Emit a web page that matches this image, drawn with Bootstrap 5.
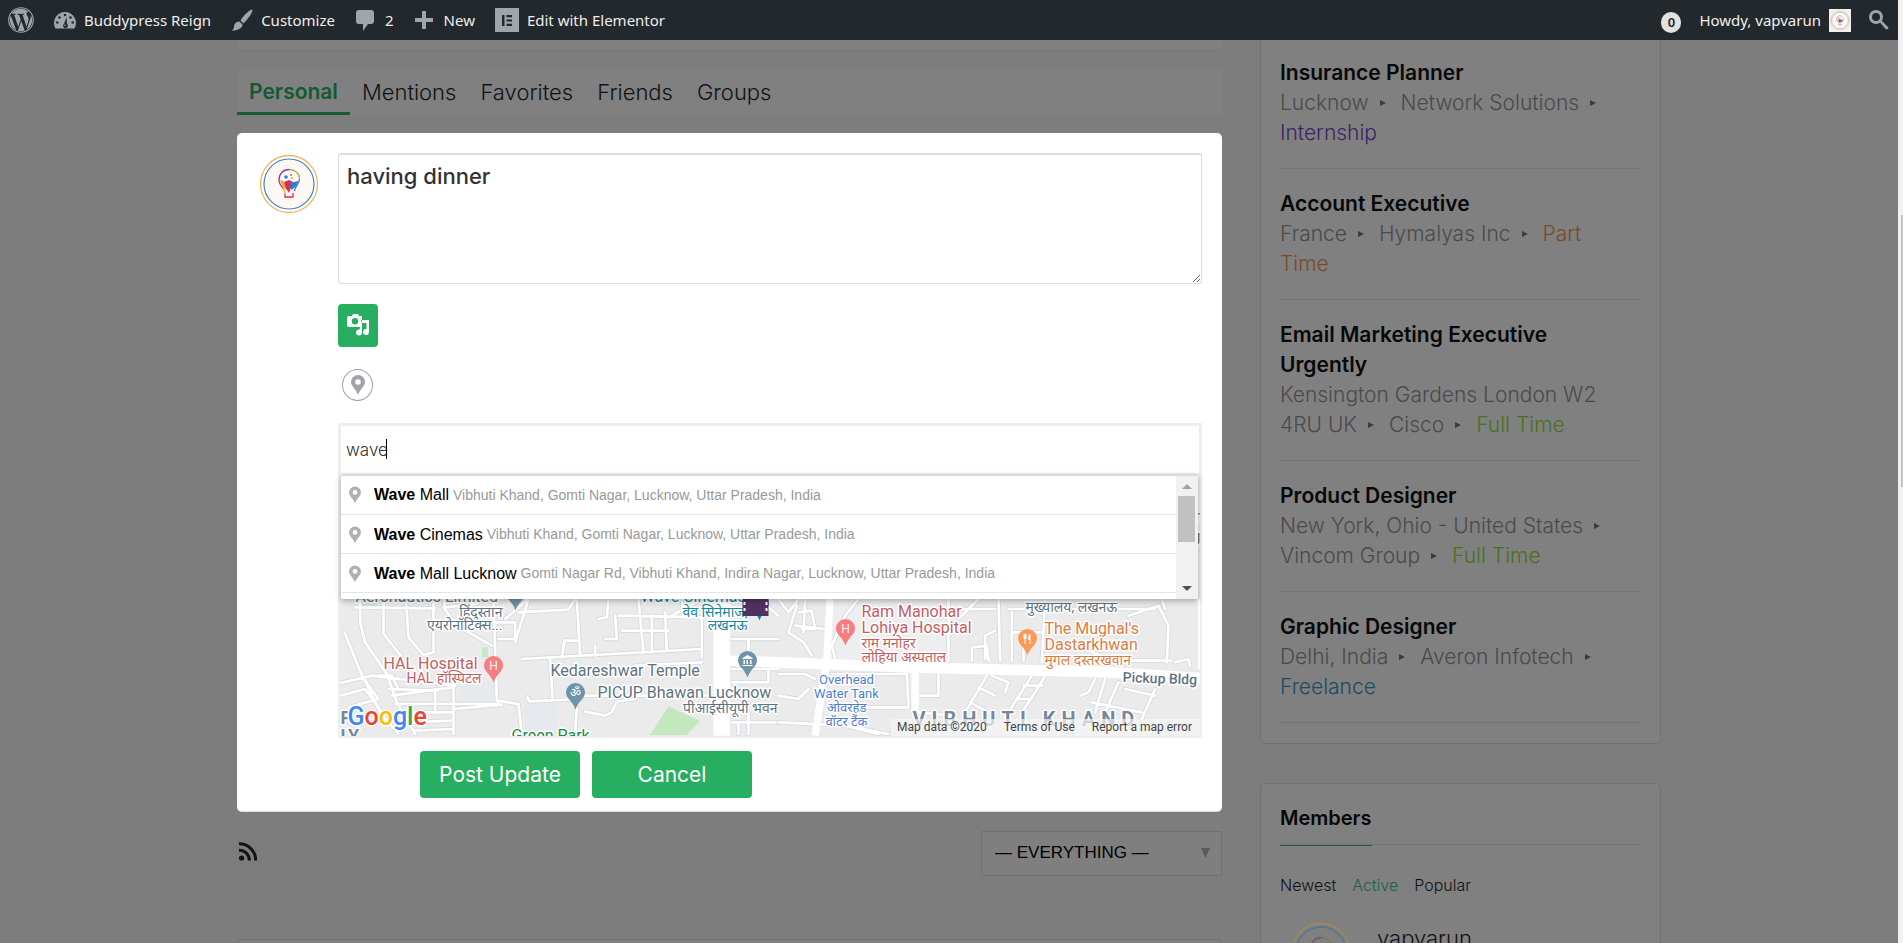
<!DOCTYPE html>
<html lang="en">
<head>
<meta charset="utf-8">
<meta name="viewport" content="width=device-width, initial-scale=1">
<title>Activity – Buddypress Reign</title>
<link href="https://cdn.jsdelivr.net/npm/bootstrap@5.3.0/dist/css/bootstrap.min.css" rel="stylesheet">
<style>
  body { background: #7d7d7d; font-family: Inter, "Noto Sans", sans-serif; color: #101316; overflow: hidden; height: 100vh; border-right: 5px solid #f1f1f1; }
  a { text-decoration: none; color: inherit; }
  .admin-bar { background: #23282d; height: 40px; color: #eee; font: 15px/40px "Noto Sans", sans-serif; padding: 0 9px 0 8px; }
  .admin-bar svg { fill: #a0a5aa; flex: none; }
  .admin-left { gap: 20px; }
  .admin-right { gap: 18px; }
  .count-pill { background: #e1e1e1; color: #23282d; width: 20px; height: 21px; border-radius: 10px; font-size: 13px; font-weight: 600; line-height: 20px; text-align: center; margin-top: 5px; }
  .page-wrap { max-width: 1424px; width: 100%; margin: 0 auto; gap: 38px; }
  .main-col { flex: 1 1 auto; min-width: 0; }
  .side-col { flex: 0 0 401px; }
  .top-panel { height: 11px; background: #808080; border-bottom: 1px solid #7a7a7a; }
  .tab-strip { background: #808080; margin-top: 19px; height: 45px; font-size: 22px; font-weight: 300; line-height: 44px; }
  .tab-strip a { padding: 0 12px; height: 45px; }
  .tab-strip a.current { color: #125a30; font-weight: 600; font-size: 21px; border-bottom: 3px solid #175c33; }
  .composer { background: #fff; border-radius: 5px; margin-top: 18px; padding: 20px 20px 13px 22px; border-bottom: 1px solid #ddd; }
  .composer-avatar { margin-right: 19px; }
  .status-box { height: 131px; border: 1px solid #ddd; border-top: 2px solid #dedede; border-radius: 3px; color: #333; font-size: 22px; font-weight: 500; line-height: 28px; padding: 7px 8px; resize: vertical; width: 100%; display: block; }
  .green-btn { background: #27ae60; color: #fff; border: 0; border-radius: 4px; }
  .media-btn { width: 40px; height: 43px; margin-top: 20px; display: block; padding: 0 0 3px; }
  .pin-btn { width: 31px; height: 32px; margin: 22px 0 0 4px; border: 1px solid #a0a0a6; border-radius: 50%; background: #fff; padding: 0; display: block; line-height: 1; }
  .place-box { border: 2px solid #eee; margin-top: 22px; position: relative; }
  .place-input { display: block; width: 100%; height: 49px; border: 1px solid #eee; padding: 0 5px; font-size: 17px; font-weight: 300; color: #333; outline: 0; }
  .caret-line { position: absolute; left: 46px; top: 14px; width: 1px; height: 20px; background: #000; }
  .suggest { position: absolute; top: 50px; left: 1px; right: 2px; height: 124px; background: #fff; box-shadow: 0 2px 6px rgba(0,0,0,.3); border-top: 1px solid #d9d9d9; border-radius: 2px; overflow: hidden; font-family: "Liberation Sans", Arial, sans-serif; z-index: 2; }
  .suggest button { display: flex; align-items: center; width: 100%; height: 39px; border: 0; border-bottom: 1px solid #e6e6e6; background: #fff; color: #999; font-size: 14px; text-align: left; padding: 1px 0 0 8px; white-space: nowrap; overflow: hidden; }
  .suggest button:first-child { padding-top: 0; }
  .suggest .place { font-size: 16px; color: #000; margin: 0 4px 0 13px; }
  .bar-track { flex: 0 0 22px; background: #f1f1f1; padding: 8px 3px 8px 2px; }
  .bar-thumb { height: 46px; width: 17px; background: #c1c1c1; margin-top: 7px; }
  .map-view { display: block; width: 100%; height: 262px; background: #ebebeb; font-family: Roboto, "Noto Sans", sans-serif; }
  .map-foot { position: absolute; right: 0; bottom: 0; background: rgba(245,245,245,.7); font: 12px/17px Roboto, sans-serif; color: #444; padding: 0 8px 0 6px; gap: 17px; }
  .composer-actions { gap: 12px; margin: 13px 0 0 161px; }
  .action-btn { width: 160px; height: 47px; font-size: 21px; line-height: 47px; padding: 0; }
  .action-btn:hover { background: #219653; color: #fff; }
  .filter-row { margin-top: 19px; height: 45px; }
  .rss-link { margin: 0 0 4px 2px; }
  .filter-select { width: 241px; height: 45px; background: #7f7f7f; border: 1px solid #707070; border-radius: 2px; appearance: none; font: 17px "Liberation Sans", Arial, sans-serif; color: #000; padding: 0 13px 2px; display: block; }
  .select-mark { position: absolute; right: 12px; top: 17px; }
  .feed-top { margin-top: 63px; height: 40px; border: 1px solid #717171; border-radius: 4px; background: #808080; }
  .side-panel { background: #808080; border: 1px solid #727272; border-radius: 5px; padding: 0 19px; }
  .jobs { border-top: 0; border-radius: 0 0 5px 5px; padding-bottom: 20px; font-size: 21px; line-height: 30px; }
  .job { padding: 20px 0; border-bottom: 1px solid #757575; }
  .job:first-child { padding-top: 18px; }
  .job h3 { font-size: 21px; line-height: 30px; font-weight: 600; margin: 0; color: #070809; }
  .job p { margin: 0; font-weight: 300; color: #4a4a4a; }
  .sep { display: inline-block; border: 3px solid transparent; border-left: 6px solid #3c3c3c; border-right: 0; margin: 0 15px 4px 11px; }
  .type-intern { color: #3a2468; }
  .type-part { color: #7d482a; }
  .type-full { color: #48701e; }
  .type-free { color: #1f4a63; }
  .members { margin-top: 39px; height: 240px; }
  .members h2 { font-size: 20px; font-weight: 600; line-height: 24px; padding: 22px 0 14px; margin: 0; border-bottom: 1px solid #747474; color: #070809; }
  .members h2 span { border-bottom: 1px solid #17633a; padding-bottom: 15px; }
  .member-tabs { font-size: 16px; font-weight: 300; line-height: 20px; margin-top: 30px; gap: 16px; }
  .member-tabs .current { color: #17633a; }
  .member-row { margin-top: 27px; }
  .member-avatar { margin: 0 26px 0 11px; opacity: .55; }
  .member-name { font-size: 22px; font-weight: 300; line-height: 32px; }
  .page-thumb { position: absolute; right: 0; top: 215px; width: 2px; height: 272px; background: #c1c1c1; z-index: 5; }
</style>
</head>
<body>
<svg width="0" height="0" class="position-absolute" aria-hidden="true">
  <defs>
    <symbol id="bulb" viewBox="0 0 60 60">
      <circle cx="30" cy="30" r="28.500" fill="none" stroke="#f0b45c" stroke-width="1.300"/>
      <circle cx="30" cy="30" r="25" fill="#fdf8f3" stroke="#3f86bd" stroke-width="1.200"/>
      <g fill="none" stroke-width="1.300">
        <path d="M24 34c-3-3-4-5-4-8 0-6 4-10.500 10-10.500" stroke="#8d3f97"/>
        <path d="M30 15.500c6 0 10.500 4 10.500 9" stroke="#8fb33c"/>
        <path d="M40.500 25c0 5-5 8-5 12" stroke="#3778bd"/>
        <path d="M24 34c2 2 2 3 2 6" stroke="#e8a13a"/>
        <path d="M26 40v3h8v-4" stroke="#d1315f"/>
      </g>
      <path d="M21 26q3 0 4 2l3 8q-5-2-7-10" fill="#f0a92c"/>
      <path d="M25 28l5-2 4 2-4 11q-4-5-5-11" fill="#dc2b56"/>
      <path d="M31 29l8-2q0 5-7 9" fill="#2c7fd0"/>
      <circle cx="27" cy="23" r="1.800" fill="#2c7fd0"/><circle cx="32" cy="21" r="1" fill="#e2507d"/><circle cx="33" cy="24" r="1" fill="#f0a92c"/>
    </symbol>
    <symbol id="bulb-line" viewBox="0 0 60 60">
      <g fill="none" stroke-width="1.300">
        <circle cx="30" cy="30" r="28.500" stroke="#c98e3a"/><circle cx="30" cy="30" r="25" stroke="#2d6f9f"/>
        <path d="M24 34c-3-3-4-5-4-8 0-6 4-10.500 10-10.500" stroke="#5d2a64"/><path d="M30 15.500c6 0 10.500 4 10.500 9" stroke="#5c7722"/>
      </g>
    </symbol>
    <symbol id="pin" viewBox="0 0 14 20"><path fill-rule="evenodd" d="M7 0a7 7 0 0 1 7 7c0 4-5 7-7 13C5 14 0 11 0 7a7 7 0 0 1 7-7m0 4.200a2.800 2.800 0 1 0 0 5.600 2.800 2.800 0 0 0 0-5.600"/></symbol>
    <symbol id="drop" viewBox="0 0 20 27"><path d="M10 0a9.500 9.500 0 0 1 9.500 9.500c0 6-6.500 8-9.500 17-3-9-9.500-11-9.500-17A9.500 9.500 0 0 1 10 0"/></symbol>
  </defs>
</svg>
<div class="page-thumb"></div>

<nav class="admin-bar d-flex justify-content-between" aria-label="Toolbar">
  <div class="admin-left d-flex align-items-center">
    <a href="#" class="d-flex" aria-label="WordPress"><svg width="26" height="26" viewBox="0 0 16 16"><circle cx="8" cy="8" r="7.550" fill="none" stroke="#a0a5aa" stroke-width=".7"/><path d="M12.633 7.653c0-.848-.305-1.435-.566-1.892l-.08-.13c-.317-.51-.594-.958-.594-1.480 0-.63.478-1.218 1.152-1.218.02 0 .039.002.058.003l.031.003A6.838 6.838 0 0 0 8 1.137 6.855 6.855 0 0 0 2.266 4.230c.16.005.313.009.442.009.717 0 1.828-.087 1.828-.087.37-.022.414.521.044.565 0 0-.371.044-.785.065l2.500 7.434 1.500-4.506-1.070-2.929c-.369-.022-.719-.065-.719-.065-.37-.022-.326-.588.043-.566 0 0 1.134.087 1.808.087.718 0 1.830-.087 1.830-.087.37-.022.413.522.043.566 0 0-.372.043-.785.065l2.480 7.377.684-2.287.054-.173c.27-.86.469-1.495.469-2.046zM1.137 8a6.864 6.864 0 0 0 3.868 6.176L1.730 5.206A6.837 6.837 0 0 0 1.137 8z"/><path d="M6.061 14.583 8.121 8.600l2.109 5.780c.014.033.03.064.049.094a6.854 6.854 0 0 1-4.218.109zm7.960-9.876c.03.219.047.453.047.706 0 .696-.13 1.479-.522 2.458l-2.096 6.060a6.860 6.860 0 0 0 2.572-9.224z"/></svg></a>
    <a href="#" class="d-flex align-items-center"><svg width="22" height="17" viewBox="0 0 22 17"><path d="M11 0a11 11 0 0 1 9.500 16.500h-19A11 11 0 0 1 11 0"/><g fill="#23282d"><circle cx="11" cy="3" r="1.300"/><circle cx="5.500" cy="5.500" r="1.300"/><circle cx="3.300" cy="10.500" r="1.300"/><circle cx="18.700" cy="10.500" r="1.300"/><circle cx="16.500" cy="5.500" r="1.300"/><path d="M12.500 5l.5 7a2.300 2.300 0 1 1-3 0z"/></g><circle cx="11" cy="13.300" r=".8"/></svg><span class="ms-2">Buddypress Reign</span></a>
    <a href="#" class="d-flex align-items-center"><svg width="22" height="22" viewBox="0 0 22 22"><path d="M21.500.5c-3 0-9 6-12 11l3 3C17 10 21.500 4 21.500.5M8.500 12.500l3 3c0 3-4 6.500-11 6 3-1.500 2-3 3-6 .8-2 3-3 5-3"/></svg><span class="ms-2">Customize</span></a>
    <a href="#" class="d-flex align-items-center gap-2"><svg width="22" height="21" viewBox="0 0 22 21"><path d="M4 0h12q3 0 3 3v8q0 3-3 3h-3l-5 7v-7H4q-3 0-3-3V3q0-3 3-3"/></svg><span>2</span></a>
    <a href="#" class="d-flex align-items-center gap-2"><svg width="22" height="18" viewBox="0 0 22 18"><path d="M8 0h4v7h7v4h-7v7H8v-7H1V7h7z"/></svg><span>New</span></a>
    <a href="#" class="d-flex align-items-center"><svg width="24" height="24" viewBox="0 0 24 24"><path fill-rule="evenodd" d="M0 0h24v24H0zM7 7v11h2.500V7zM11.500 7v2.200H17V7zm0 4.400v2.200H17v-2.200zm0 4.400V18H17v-2.200z"/></svg><span class="ms-2">Edit with Elementor</span></a>
  </div>
  <div class="admin-right d-flex align-items-center">
    <a href="#" class="count-pill">0</a>
    <a href="#" class="d-flex align-items-center">Howdy, vapvarun<svg class="ms-2" width="22" height="23" viewBox="0 0 22 23"><rect width="22" height="23" fill="#f3f1ee"/><use href="#bulb" x="1" y="1" width="20" height="21"/></svg></a>
    <a href="#" class="d-flex" aria-label="Search"><svg width="20" height="20" viewBox="0 0 20 20"><circle cx="7" cy="7" r="5.500" fill="none" stroke="#a0a5aa" stroke-width="3"/><path d="M10.500 12l2-1.500 7 7q0 2-2.500 2z"/></svg></a>
  </div>
</nav>

<div class="page-wrap d-flex align-items-start">
  <main class="main-col">
    <div class="top-panel"></div>
    <nav class="tab-strip d-flex" aria-label="Activity">
      <a href="#" class="current">Personal</a><a href="#">Mentions</a><a href="#">Favorites</a><a href="#">Friends</a><a href="#">Groups</a>
    </nav>

    <form class="composer">
      <div class="d-flex">
        <svg class="composer-avatar flex-shrink-0" width="60" height="62"><use href="#bulb" width="60" height="62"/></svg>
        <div class="flex-grow-1">
          <textarea class="status-box" aria-label="What's new">having dinner</textarea>
          <button type="button" class="green-btn media-btn" aria-label="Add media"><svg width="23" height="22" viewBox="0 0 23 22" fill="#fff"><path fill-rule="evenodd" d="M2 2h3l1-2h5l1 2h3v4h-1v7H2q-2 0-2-2V4q0-2 2-2m6 2a3 3 0 1 0 0 6.500A3 3 0 0 0 8 4"/><path d="M15 6h7v12a3 3 0 1 1-2.500-3V9H15v9.500a3 3 0 1 1-2.500-3z"/></svg></button>
          <button type="button" class="pin-btn" aria-label="Add location"><svg width="14" height="20" fill="#a2a2aa"><use href="#pin"/></svg></button>
          <div class="place-box">
            <input class="place-input" type="text" value="wave" aria-label="Place">
            <span class="caret-line"></span>
            <div class="suggest d-flex">
              <div class="flex-grow-1 overflow-hidden">
                <button type="button"><svg width="12" height="20" fill="#b0b0b0"><use href="#pin"/></svg><span class="place"><b>Wave</b> Mall</span>Vibhuti Khand, Gomti Nagar, Lucknow, Uttar Pradesh, India</button>
                <button type="button"><svg width="12" height="20" fill="#b0b0b0"><use href="#pin"/></svg><span class="place"><b>Wave</b> Cinemas</span>Vibhuti Khand, Gomti Nagar, Lucknow, Uttar Pradesh, India</button>
                <button type="button"><svg width="12" height="20" fill="#b0b0b0"><use href="#pin"/></svg><span class="place"><b>Wave</b> Mall Lucknow</span>Gomti Nagar Rd, Vibhuti Khand, Indira Nagar, Lucknow, Uttar Pradesh, India</button>
              </div>
              <div class="bar-track d-flex flex-column justify-content-between align-items-center">
                <div class="d-flex flex-column align-items-center"><svg width="10" height="5"><path d="M0 5l5-5 5 5z" fill="#a3a3a3"/></svg><div class="bar-thumb"></div></div>
                <svg width="10" height="5"><path d="M0 0h10L5 5z" fill="#505050"/></svg>
              </div>
            </div>
            <svg class="map-view" viewBox="0 0 861 262" preserveAspectRatio="xMidYMid slice" role="img" aria-label="Map of Vibhuti Khand">
              <rect width="861" height="262" fill="#ebebeb"/>
              <defs>
                <g id="roadsA" fill="none" stroke-linejoin="round" stroke-linecap="round">
                  <path d="M80 85L320 88M95 60V130L110 190 175 285 205 370 260 465M165 60V165L225 240M232 60L240 175 285 228 315 220V60M345 60L350 85 440 75 470 60M345 85L385 140 490 200M48 160L90 265 155 400 210 465M0 320L130 290 380 320M35 350L110 330 160 400M100 290L150 360 60 385M190 350L370 325M180 330L325 335M200 375L510 375M320 330V395M375 250V465M210 400H375M240 430L375 425M260 455L375 450M210 330L190 290 150 290M495 60L505 365 570 375 580 465M375 390L520 377M500 130L560 130 560 180 510 180M530 120L600 60M570 100L720 92 740 60M580 240L1120 210M745 60L755 230M700 235L708 185H750M665 240L672 355M800 200V230M840 60L835 115 810 120M860 110L865 180 830 180M870 110L1120 115M930 60L945 220M970 110V220M1010 100L1015 215M880 155H1020M1060 60L1065 115M1120 115V235M1020 115L1120 60M920 260L1120 250M597 355L603 367 760 360M740 350H1140M770 398L830 410 850 400 865 368 920 360M745 385L740 465M1210 180H1350M1260 180V215M1210 270H1350M1210 310H1320V270M1210 430H1350M1230 430V465M1260 400V465M1290 60L1350 110M600 60L560 190"/>
                </g>
                <g id="roadsB" fill="none" stroke-linejoin="round" stroke-linecap="round">
                  <path d="M0 60L30 100 60 60M55 80L30 160 75 190 100 230M60 100L100 95 110 150 70 150M80 60L75 160M50 140L140 150M240 60L200 110 160 200 170 240M510 60V245M600 60L540 120M540 90H650M660 60L665 245M620 240V170L650 155M580 245V205L625 200 630 245M700 100V245M735 160V245M700 160H790M800 60L790 250M690 90H1130M1050 110L1140 80 1170 140 1165 250M920 210L1000 245H1180M1190 250L1230 240 1235 260M1150 60L1160 90M0 285H80L110 300M0 350L60 360 90 330M160 285H385L390 385H240L150 380M480 270V350L400 350M625 290L560 400M575 370L630 400M600 325L650 350M640 290L690 310 680 340M760 290L690 400M735 320H790M715 360H760M800 290L770 340 730 400M950 300L930 340 905 350M980 300L950 400M1020 310L980 400M1130 330L1090 420M1040 330L1130 350M940 370L1090 400M180 435L300 465M0 430L200 440 330 465M420 400L520 410"/>
                </g>
              </defs>
              <g transform="translate(-11 105) scale(.3333)">
                <path d="M1020 382l95 43-40 43H965z" fill="#c3e8c0"/><path d="M460 205h18v30h-18zM85 60h70l-10 20H95z" fill="#c6e7c8"/><path d="M590 370h95v95h-95zM390 310h105v60H400z" fill="#e6e9ed"/>
                <use href="#roadsA" stroke="#d6dade" stroke-width="13"/><use href="#roadsA" stroke="#fff" stroke-width="8"/>
                <path d="M1180 60V470" stroke="#fff" stroke-width="50"/>
              </g>
              <g transform="translate(439 105) scale(.3333)">
                <path d="M170 60h335v180H150z" fill="#eceef0"/>
                <use href="#roadsB" stroke="#d6dade" stroke-width="13"/><use href="#roadsB" stroke="#fff" stroke-width="8"/>
                <path d="M155 60L145 240 110 470M410 270V400" stroke="#fff" stroke-width="22" fill="none"/>
                <path d="M-160 245L0 250 400 265 1000 280 1270 298" stroke="#fff" stroke-width="32" fill="none"/>
                <path d="M1262 60V270" stroke="#fff" stroke-width="8"/>
              </g>
              <g font-size="16" stroke="#fff" stroke-width="3" stroke-linejoin="round" paint-order="stroke">
                <g fill="#5e7382">
                  <text x="16" y="128">Aeronautics Limited</text>
                  <text x="163" y="143" font-size="14" text-anchor="end">हिंदुस्तान</text>
                  <text x="163" y="156" font-size="14" text-anchor="end">एयरोनॉटिक्स...</text>
                  <text x="211" y="202">Kedareshwar Temple</text>
                  <text x="258" y="224">PICUP Bhawan Lucknow</text>
                  <text x="438" y="239" font-size="14" text-anchor="end">पीआईसीयूपी भवन</text>
                  <text x="686" y="138" font-size="14">मुख्यालय, लखनऊ</text>
                  <text x="783" y="208" font-size="14" font-weight="500" transform="rotate(2 783 208)">Pickup Bldg</text>
                  <text x="861" y="48" text-anchor="end">r</text><text x="861" y="68" text-anchor="end">g</text>
                </g>
                <g fill="#12899b">
                  <text x="301" y="128">Wave Cinemas</text>
                  <text x="408" y="143" font-size="14" text-anchor="end">वेव सिनेमाज,</text>
                  <text x="408" y="156" font-size="14" text-anchor="end">लखनऊ</text>
                </g>
                <g fill="#c45d62">
                  <text x="44" y="195">HAL Hospital</text>
                  <text x="142" y="209" font-size="14" text-anchor="end">HAL हॉस्पिटल</text>
                  <text x="522" y="143">Ram Manohar</text><text x="522" y="159">Lohiya Hospital</text>
                  <text x="522" y="174" font-size="14">राम मनोहर</text><text x="522" y="188" font-size="14">लोहिया अस्पताल</text>
                </g>
                <g fill="#dd7b42">
                  <text x="705" y="160">The Mughal's</text><text x="705" y="176">Dastarkhwan</text><text x="705" y="191" font-size="14">मुगल दस्तरखवान</text>
                </g>
                <g fill="#4c7fd0" font-size="13" text-anchor="middle">
                  <text x="507" y="210">Overhead</text><text x="507" y="224">Water Tank</text><text x="507" y="238">ओवरहेड</text><text x="507" y="252">वॉटर टैंक</text>
                </g>
                <text x="172" y="267" fill="#1d8a43">Green Park</text>
                <g fill="#77879a" font-weight="700" font-size="20">
                  <text x="573" y="252" letter-spacing="6">VIBHUTI KHAND</text>
                  <text x="1" y="250" font-size="18">P</text><text x="1" y="268" font-size="18">LY</text>
                </g>
                <text x="8" y="251" font-size="25" font-weight="500" fill="#4285f4">G<tspan fill="#ea4335">o</tspan><tspan fill="#fbbc05">o</tspan><tspan>g</tspan><tspan fill="#34a853">l</tspan><tspan fill="#ea4335">e</tspan></text>
              </g>
              <g>
                <use href="#drop" x="144" y="182" width="20" height="27" fill="#f97c80"/>
                <use href="#drop" x="496" y="145" width="20" height="27" fill="#f97c80"/>
                <use href="#drop" x="166" y="110" width="20" height="27" fill="#6f94a8"/>
                <use href="#drop" x="398" y="177" width="20" height="27" fill="#6f94a8"/>
                <use href="#drop" x="226" y="209" width="20" height="27" fill="#6f94a8"/>
                <use href="#drop" x="410" y="120" width="20" height="27" fill="#12899b"/>
                <use href="#drop" x="678" y="155" width="20" height="27" fill="#fb9a56"/>
                <g fill="#fff" font-size="12" text-anchor="middle"><text x="154" y="196">H</text><text x="506" y="159">H</text><text x="236" y="223">ॐ</text></g>
                <path d="M403 184l5-3 5 3v1h-10zM404 186h1.500v4H404zM407 186h1.500v4H407zM410.500 186h1.500v4h-1.500zM403 191h10v1h-10z" fill="#fff"/>
                <path d="M684 160v4q0 1 1 1v5h1v-5q1 0 1-1v-4M690 160q-2 2-1 6h1v4h1v-10z" fill="#fff"/>
                <path d="M403 115h26v27h-26z" fill="#52305f"/><path d="M404 128h2v3h-2zM404 134h2v3h-2zM426 128h2v3h-2zM426 134h2v3h-2z" fill="#fff"/>
              </g>
            </svg>
            <div class="map-foot d-flex"><span>Map data ©2020</span><a href="#">Terms of Use</a><a href="#">Report a map error</a></div>
          </div>
        </div>
      </div>
      <div class="composer-actions d-flex">
        <button type="submit" class="btn green-btn action-btn">Post Update</button>
        <button type="button" class="btn green-btn action-btn">Cancel</button>
      </div>
    </form>

    <div class="filter-row d-flex justify-content-between align-items-center">
      <a href="#" aria-label="RSS" class="rss-link d-flex"><svg width="18" height="19" viewBox="0 0 18 19"><circle cx="2.600" cy="16" r="2.600" fill="#101316"/><path d="M0 8.200A10 10 0 0 1 10.300 18.500M0 1.800A16.500 16.500 0 0 1 16.700 18.500" fill="none" stroke="#101316" stroke-width="3"/></svg></a>
      <div class="position-relative">
        <select class="filter-select" aria-label="Show"><option>— EVERYTHING —</option></select>
        <svg class="select-mark" width="9" height="10"><path d="M0 0h9L4.500 10z" fill="#5c5c5c"/></svg>
      </div>
    </div>
    <div class="feed-top"></div>
  </main>

  <aside class="side-col">
    <section class="side-panel jobs">
      <div class="job"><h3>Insurance Planner</h3><p>Lucknow<i class="sep"></i>Network Solutions<i class="sep"></i><br><a href="#" class="type-intern">Internship</a></p></div>
      <div class="job"><h3>Account Executive</h3><p>France<i class="sep"></i>Hymalyas Inc<i class="sep"></i><a href="#" class="type-part">Part<br>Time</a></p></div>
      <div class="job"><h3>Email Marketing Executive<br>Urgently</h3><p>Kensington Gardens London W2<br>4RU UK<i class="sep"></i>Cisco<i class="sep"></i><a href="#" class="type-full">Full Time</a></p></div>
      <div class="job"><h3>Product Designer</h3><p>New York, Ohio - United States<i class="sep"></i><br>Vincom Group<i class="sep"></i><a href="#" class="type-full">Full Time</a></p></div>
      <div class="job"><h3>Graphic Designer</h3><p>Delhi, India<i class="sep"></i>Averon Infotech<i class="sep"></i><br><a href="#" class="type-free">Freelance</a></p></div>
    </section>
    <section class="side-panel members">
      <h2><span>Members</span></h2>
      <nav class="member-tabs d-flex" aria-label="Members"><a href="#">Newest</a><a href="#" class="current">Active</a><a href="#">Popular</a></nav>
      <div class="member-row d-flex align-items-start">
        <svg class="member-avatar" width="60" height="60"><use href="#bulb-line"/></svg>
        <a href="#" class="member-name">vapvarun</a>
      </div>
    </section>
  </aside>
</div>
<script src="https://cdn.jsdelivr.net/npm/bootstrap@5.3.0/dist/js/bootstrap.bundle.min.js"></script>
</body>
</html>
